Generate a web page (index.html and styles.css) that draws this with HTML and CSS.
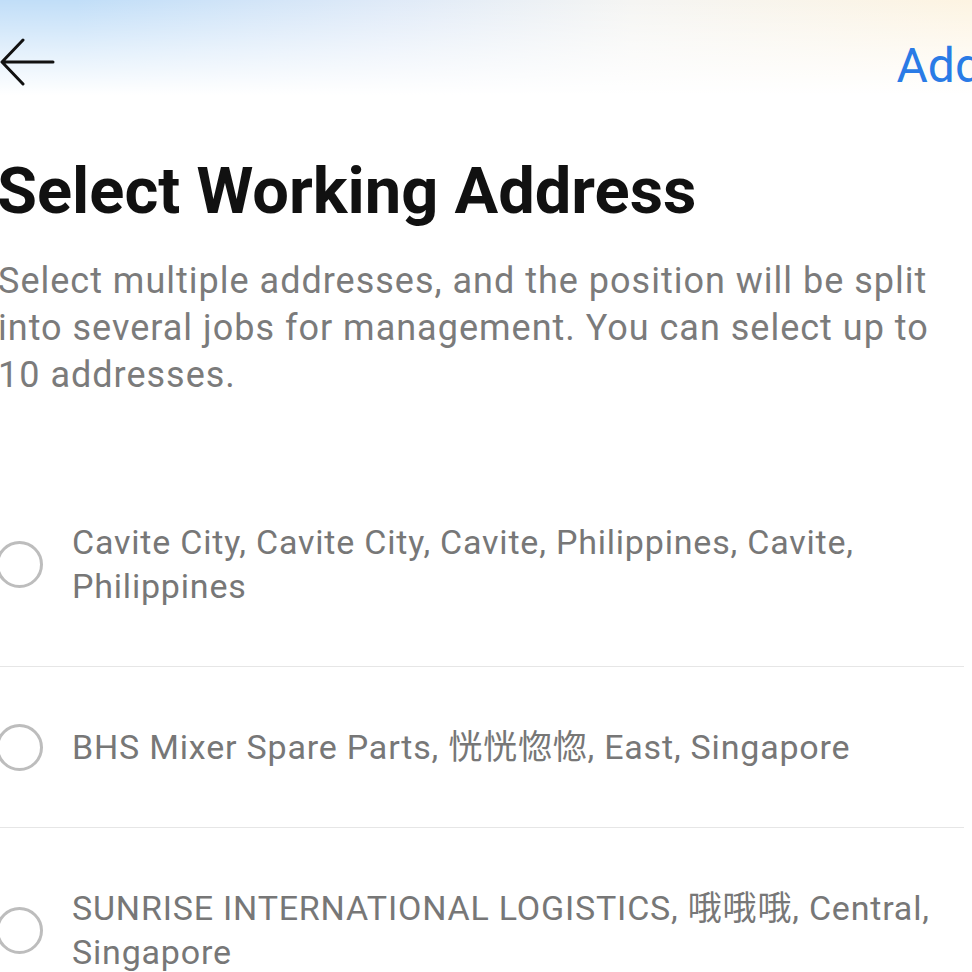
FILE: index.html
```html
<!DOCTYPE html>
<html>
<head>
	<title>Select Working Address</title>
	<meta charset="utf-8">
	<link rel="stylesheet" href="styles.css">
</head>
<body>
	<div class="page">
		<div class="topbar">
			<div class="back">
				<svg width="56" height="50" viewBox="0 0 56 50">
					<path d="M53 24 H3 M23 2 L2 24 L23 46" fill="none" stroke="#111" stroke-width="3" stroke-linecap="round" stroke-linejoin="round"/>
				</svg>
			</div>
			<div class="add">Add</div>
		</div>

		<div class="intro">
			<h1 class="title">Select Working Address</h1>
			<p class="desc">Select multiple addresses, and the position will be split into several jobs for management. You can select up to 10 addresses.</p>
		</div>

		<ul class="list">
			<li class="item">
				<span class="radio"></span>
				<span class="addr">Cavite City, Cavite City, Cavite, Philippines, Cavite, Philippines</span>
			</li>
			<li class="item">
				<span class="radio"></span>
				<span class="addr">BHS Mixer Spare Parts, 恍恍惚惚, East, Singapore</span>
			</li>
			<li class="item">
				<span class="radio"></span>
				<span class="addr">SUNRISE INTERNATIONAL LOGISTICS, 哦哦哦, Central, Singapore</span>
			</li>
		</ul>
	</div>
</body>
</html>
```

FILE: styles.css
```css
*{margin:0;padding:0;list-style:none;box-sizing:border-box;}
html,body{background:#fff;overflow:hidden;}
body{font-family:Roboto,"Noto Sans CJK SC","Noto Sans",sans-serif;}
.page{width:972px;height:972px;overflow:hidden;
	background:
		linear-gradient(to bottom,rgba(255,255,255,0) 0,rgba(255,255,255,0.55) 50px,#fff 95px),
		linear-gradient(to right,#c1def8 8%,#dfeaf8 40%,#f5f5f3 65%,#fdf4e2 100%);
	background-repeat:no-repeat;background-size:100% 130px;}
.topbar{height:125px;display:flex;justify-content:space-between;align-items:flex-start;padding-top:38px;}
.back{width:56px;height:50px;}
.back svg{display:block;}
.add{font-size:48px;color:#2a7be6;line-height:56px;margin-top:0;margin-right:-10px;white-space:nowrap;}
.intro{padding-right:20px;}
.title{font-size:65px;font-weight:700;color:#111;line-height:80px;margin-left:-3px;margin-top:26px;}
.desc{font-size:36px;letter-spacing:1px;color:#7b7b7b;line-height:47px;margin-top:27px;margin-left:-2px;}
.list{margin-top:63px;margin-right:8px;}
.item{display:flex;align-items:center;gap:29px;padding:58px 20px 58px 0;border-bottom:1px solid #e6e6e6;}
.radio{flex:none;width:47px;height:47px;border-radius:50%;border:3px solid #bdbdbd;margin:-2px 0 -2px -4px;}
.addr{font-size:34px;letter-spacing:0.8px;color:#777;line-height:44px;}
```
